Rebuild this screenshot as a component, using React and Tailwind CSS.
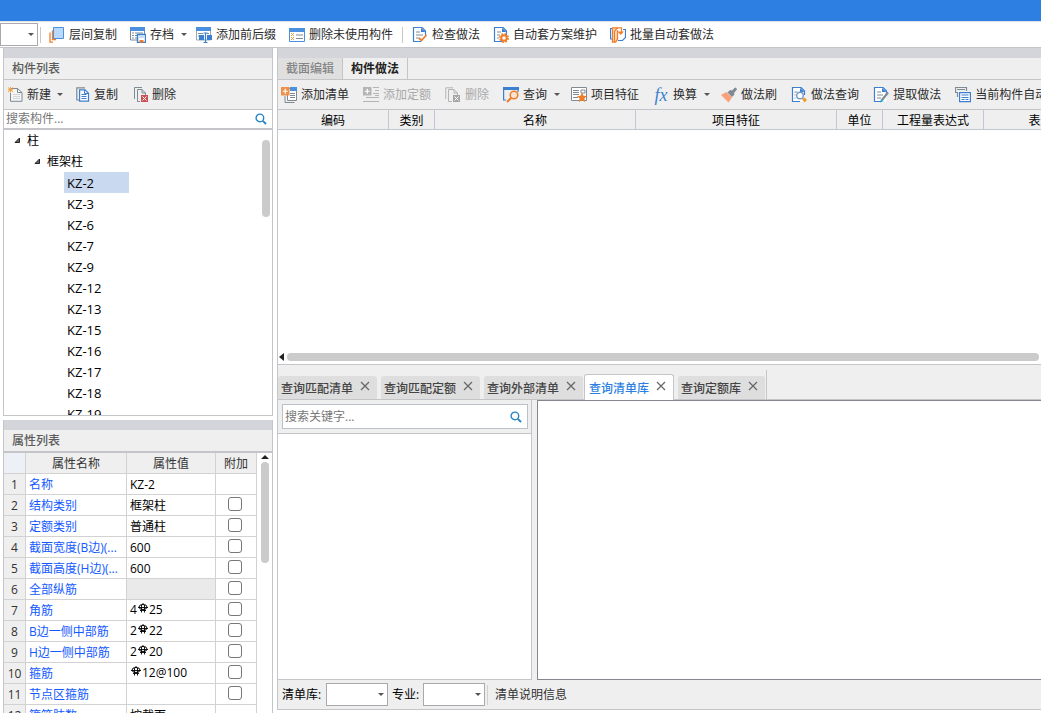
import React, { useState } from 'react';
import clsx from 'clsx';

const BLUE = '#3c7fd0';
const GRAY = '#7e8b94';
const ORANGE = '#f07d28';

const Icon = ({ children }) => (
    <svg width="16" height="16" viewBox="0 0 16 16" fill="none" className="shrink-0" aria-hidden="true">
        {children}
    </svg>
);

const Caret = () => (
    <svg width="6" height="3" viewBox="0 0 6 3" className="shrink-0" aria-hidden="true">
        <path d="M0 0h6L3 3z" fill="#555" />
    </svg>
);

const SearchIcon = () => (
    <svg width="12" height="12" viewBox="0 0 12 12" fill="none" aria-hidden="true">
        <circle cx="4.9" cy="4.9" r="3.8" stroke="#2484c1" strokeWidth="1.4" />
        <path d="M7.8 7.8L11 11" stroke="#2484c1" strokeWidth="1.8" />
    </svg>
);

// Page outline with a folded corner, shared by most document icons
const Page = ({ color = BLUE }) => (
    <>
        <path d="M1.5 .5H9l4.500 4v10h-12z" fill="#fff" />
        <path d="M9 14.500H1.500V.5H10l3.500 3.500V8" stroke={color} strokeWidth="1.2" />
        <path d="M9 1v4h4.500z" fill={color} />
    </>
);

const icons = {
    copyFloor: (
        <Icon>
            <path d="M1 5.500v9.700h3M3.500 3.500v9H7" stroke={ORANGE} strokeWidth="1.300" />
            <path d="M4.500 .5h10v11h-10z" fill="#b9d8fb" stroke="#4a90de" />
        </Icon>
    ),
    archive: (
        <Icon>
            <path d="M.5 1h14v12H.5z" fill="#fff" stroke={GRAY} />
            <path d="M0 0h15v4H0z" fill="#4a90de" />
            <path d="M2 6h2M2 8.500h2M2 11h2M5 6h8M5 8.500h2M5 11h2" stroke={GRAY} />
            <path d="M7.500 7.500h8v8h-8z" fill="#fff" stroke="#3c7fd0" strokeWidth="1.400" />
            <path d="M9 8h5v3H9z" fill="#c7def8" />
            <path d="M9.500 13h4v2.500h-4z" fill={ORANGE} />
        </Icon>
    ),
    prefix: (
        <Icon>
            <path d="M.5 1h14v12H.5z" fill="#fff" stroke="#9aa7b3" />
            <path d="M0 0h15v4H0z" fill="#4a90de" />
            <path d="M2 6.500h5M2 9h3M11 6.500h2" stroke={GRAY} />
            <path d="M3 8h5v5H3zM11 8h5v5h-5z" fill="#3c7fd0" />
            <path d="M9.500 6v9.500M7.500 6h4M7.500 15.500h4" stroke="#3c7fd0" strokeWidth="1.200" />
        </Icon>
    ),
    removeUnused: (
        <Icon>
            <path d="M.5 1.500h15v13H.5z" fill="#fff" stroke="#4a90de" />
            <path d="M0 1h16v4H0z" fill="#4a90de" />
            <path d="M2 6l3 3M5 6L2 9M2 10l3 3M5 10l-3 3" stroke="#f0a03c" />
            <path d="M7 8h7M7 11.500h7" stroke={GRAY} />
        </Icon>
    ),
    check: (
        <Icon>
            <Page />
            <path d="M4 5h4M4 8h7M4 11h3" stroke={GRAY} />
            <path d="M7 11l2.500 2.500L14.500 8" stroke={ORANGE} strokeWidth="1.800" />
        </Icon>
    ),
    scheme: (
        <Icon>
            <Page />
            <path d="M4 5h4M4 8h3M4 11h2" stroke={GRAY} />
            <circle cx="11" cy="11" r="2.800" stroke={ORANGE} strokeWidth="2" />
            <circle cx="11" cy="11" r="4.200" stroke={ORANGE} strokeWidth="1.600" strokeDasharray="1.800 1.500" />
        </Icon>
    ),
    batch: (
        <Icon>
            <path d="M2.500 1.500h-2v10.500h2M13 2.500h2.500v8L12.500 13.500H8" stroke="#3c7fd0" strokeWidth="1.200" />
            <path d="M7.500 .8h-5v14.400h3l2-3v-9" fill="#fbe3d0" stroke={ORANGE} strokeWidth="1.300" />
            <path d="M4.500 15V4l3-3.200h4V5" stroke={ORANGE} strokeWidth="1.200" />
            <path d="M7.500 4.500h6.500L10.700 8z" fill={ORANGE} />
        </Icon>
    ),
    create: (
        <Icon>
            <path d="M3 1.500h6.500L14 5.500v8.800H2.500V6" fill="#f4f4f4" stroke={GRAY} />
            <path d="M9.500 1.500v4H14" stroke={GRAY} />
            <path d="M5 7.500h7M5 9.500h7M5 11.500h7" stroke="#d2d7da" />
            <path d="M0 .5l5 4.500M5 .5L0 5M2.500 0v5.500M0 2.700h5" stroke="#f0a03c" />
        </Icon>
    ),
    copy: (
        <Icon>
            <path d="M10 .8H1.800V13H4" stroke={GRAY} strokeWidth="1.200" />
            <path d="M4.600 2.800H10l3.500 3.500v7.900H4.600z" fill="#fff" stroke="#3c7fd0" strokeWidth="1.200" />
            <path d="M9.500 3v3.500h4" stroke="#3c7fd0" />
            <path d="M6.500 7.500h5M6.500 9.500h5M6.500 11.500h5" stroke="#3c7fd0" />
        </Icon>
    ),
    remove: (
        <Icon>
            <path d="M9 .5H1.500V12" stroke={GRAY} />
            <path d="M7 14.500H4.500V2.500H9l3.500 3.500v2M9 2.500V6h3.500" stroke={GRAY} />
            <path d="M8 8h7v7H8z" fill="#cf4c50" />
            <path d="M9.500 9.500l4 4M13.500 9.500l-4 4" stroke="#fff" />
        </Icon>
    ),
    addList: (
        <Icon>
            <path d="M6.500 1.500h9v12h-9z" fill="#fff" stroke={GRAY} />
            <path d="M9 0h7v4H9z" fill="#4a90de" />
            <path d="M4 9v6.500h9.500M9 6.500h5M9 8.500h5M9 10.500h5" stroke={GRAY} />
            <path d="M0 0h8.500v8.500H0z" fill="#ee9048" />
            <path d="M4.250 1.800v5M1.800 4.250h5" stroke="#fff" strokeWidth="1.200" />
        </Icon>
    ),
    addQuota: (
        <Icon>
            <path d="M0 0h8.500v8.500H0z" fill="#b4b4b4" />
            <path d="M4.250 1.800v5M1.800 4.250h5" stroke="#fff" strokeWidth="1.200" />
            <path d="M10 .5h6M12 3.500h4M10 6.500h6M12 8.500h4M3 10.500h13M0 14.500h16" stroke="#b4b4b4" />
        </Icon>
    ),
    removeOff: (
        <Icon>
            <path d="M8 .8H.8V12" stroke="#b4b4b4" />
            <path d="M7 14.500H3.500V2.500H9l3.500 3.500v2M9 2.500V6h3.500" stroke="#b4b4b4" />
            <path d="M8 8h7v7H8z" fill="#a5a5a5" />
            <path d="M9.500 9.500l4 4M13.500 9.500l-4 4" stroke="#fff" />
        </Icon>
    ),
    query: (
        <Icon>
            <path d="M15 5V1.500H.6V13H3" stroke="#3c7fd0" strokeWidth="1.200" />
            <path d="M0 0h16v3H0z" fill="#3c7fd0" />
            <circle cx="11" cy="8" r="3.800" fill="#f7e6d8" stroke={ORANGE} strokeWidth="1.500" />
            <path d="M8.300 10.700L4 15" stroke={ORANGE} strokeWidth="2.200" />
        </Icon>
    ),
    feature: (
        <Icon>
            <path d="M.5 .5h15v13H.5z" fill="#fff" stroke={GRAY} />
            <path d="M2 3.500h6M2 5.500h6M2 7.500h6M2 10.500h5M10 3h4v3h-4z" stroke={GRAY} />
            <path d="M11 5.500l1.500 3.200 3.500.4-2.600 2.400.7 3.500-3.100-1.700L7.900 15l.7-3.500L6 9.100l3.500-.4z" fill={ORANGE} />
        </Icon>
    ),
    brush: (
        <Icon>
            <path d="M15 .5l1 2-3 3.500 .5 1.500L11 10 6.500 5.500 9 3l2 .5L13.500 1z" fill="#7e8b94" />
            <path d="M5.500 5l5.500 5.500-3.500 5L0 8z" fill="#f9a27a" />
        </Icon>
    ),
    methodQuery: (
        <Icon>
            <Page />
            <path d="M3.500 5h3M3.500 8h1M3.500 11h1" stroke={GRAY} />
            <circle cx="9" cy="8.500" r="3.300" fill="#fff" stroke="#6f9bc9" strokeWidth="1.400" />
            <path d="M11 12l2.500-1.500L16 13l-2.500 2.500z" fill="#f09a28" />
        </Icon>
    ),
    extract: (
        <Icon>
            <Page />
            <path d="M4 5h4M4 8h6M4 11h4" stroke={GRAY} />
            <path d="M15 5.500L9 13" stroke={GRAY} strokeWidth="2.200" />
            <path d="M8 12l-1 3.500 3.500-1.500z" fill="#2aa5c8" />
        </Icon>
    ),
    auto: (
        <Icon>
            <path d="M3 5.500H.5v-5h11V4M2.500 5.500V10" stroke={GRAY} strokeWidth="1.200" />
            <path d="M2 2.500h8" stroke={GRAY} />
            <path d="M4.600 5.600h10.800v9H4.600z" fill="#fff" stroke="#3c7fd0" strokeWidth="1.200" />
            <path d="M6.500 8h7M6.500 12.500h3M10.500 12.500h3M6.500 10.500h7" stroke="#3c7fd0" strokeWidth="1.200" />
        </Icon>
    ),
    fx: <span className="w-4 shrink-0 font-['Liberation_Serif',serif] text-[18px] leading-4 text-[#3c7fd0] italic">fx</span>,
};

const ToolButton = ({ icon, label, caret, disabled, className }) => (
    <button
        type="button"
        disabled={disabled}
        className={clsx('flex shrink-0 items-center whitespace-nowrap', disabled ? 'text-[#a8a8a8]' : 'text-[#2b2b2b]', className)}
    >
        {icons[icon]}
        {label}
        {caret && <span className="pl-[3px]"><Caret /></span>}
    </button>
);

const Combo = ({ label, className }) => (
    <span className={clsx('relative block h-[23px] shrink-0', className)}>
        <select aria-label={label} className="size-full appearance-none border border-[#a9a9ac] bg-white" />
        <span className="pointer-events-none absolute top-[10px] right-[4px]"><Caret /></span>
    </span>
);

const components = ['KZ-2', 'KZ-3', 'KZ-6', 'KZ-7', 'KZ-9', 'KZ-12', 'KZ-13', 'KZ-15', 'KZ-16', 'KZ-17', 'KZ-18', 'KZ-19'];

// '#' in a value stands for the rebar grade sign
const properties = [
    { name: '名称', value: 'KZ-2', noCheck: true },
    { name: '结构类别', value: '框架柱' },
    { name: '定额类别', value: '普通柱' },
    { name: '截面宽度(B边)(...', value: '600' },
    { name: '截面高度(H边)(...', value: '600' },
    { name: '全部纵筋', value: '', locked: true },
    { name: '角筋', value: '4#25' },
    { name: 'B边一侧中部筋', value: '2#22' },
    { name: 'H边一侧中部筋', value: '2#20' },
    { name: '箍筋', value: '#12@100' },
    { name: '节点区箍筋', value: '' },
    { name: '箍筋肢数', value: '按截面', noCheck: true },
];

const RebarSign = () => (
    <svg width="12" height="10" viewBox="0 0 12 10" fill="none" stroke="#000" className="inline-block align-[1px]" aria-label="Φ">
        <ellipse cx="6" cy="4" rx="4" ry="2.500" />
        <path d="M1 4.500h10M3 7.500h6M4.500 2v7.500M7.500 2v7.500M6 0v2" strokeWidth=".9" />
    </svg>
);

const Value = ({ text }) => {
    const [before, after] = text.split('#');
    return after === undefined ? text : <>{before}<RebarSign />{after}</>;
};

const TreeArrow = () => (
    <svg width="7" height="7" viewBox="0 0 7 7" className="shrink-0" aria-hidden="true">
        <path d="M5.500 1v4.500H1z" fill="#666" stroke="#222" />
    </svg>
);

const ComponentPanel = () => {
    const [selected, setSelected] = useState('KZ-2');

    return (
        <section className="flex min-h-0 flex-[368] flex-col border border-t-0 border-[#c3c5c9]">
            <div className="h-[10px] shrink-0 bg-[#d4d5da]" />
            <h2 className="flex h-[22px] shrink-0 items-center border-b border-[#c3c5c9] bg-[#efefef] pl-2 font-medium text-[#5c5c5c]">构件列表</h2>
            <div className="flex h-[30px] shrink-0 items-center border-b border-[#c3c5c9] bg-[#efefef] pl-1">
                <ToolButton icon="create" label="新建" caret className="gap-[3px] pr-3" />
                <ToolButton icon="copy" label="复制" className="gap-[3px] pr-[15px]" />
                <ToolButton icon="remove" label="删除" className="gap-[3px]" />
            </div>
            <div className="flex h-5 shrink-0 items-center border-b-2 border-[#c3c5c9] pr-[5px]">
                <input type="text" aria-label="搜索构件" placeholder="搜索构件..." className="min-w-0 flex-1 pl-[2px] outline-none placeholder:text-[#777]" />
                <button type="button" aria-label="搜索"><SearchIcon /></button>
            </div>
            <div className="flex min-h-0 flex-1 overflow-hidden">
                <ul className="min-w-0 flex-1 text-black">
                    <li className="flex h-[21px] items-center gap-[6px] pl-[10px]"><TreeArrow />柱</li>
                    <li className="flex h-[21px] items-center gap-[6px] pl-[30px]"><TreeArrow />框架柱</li>
                    {components.map((name) => (
                        <li key={name} className="pl-[60px]">
                            <button
                                type="button"
                                onClick={() => setSelected(name)}
                                className={clsx('block h-[21px] w-[65px] pl-[3px] text-left text-[13px]', selected === name && 'bg-[#c9d9f0]')}
                            >
                                {name}
                            </button>
                        </li>
                    ))}
                </ul>
                <div className="mt-[10px] mr-[2px] h-[77px] w-2 rounded-full bg-[#cbcbcb]" />
            </div>
        </section>
    );
};

const PropertyPanel = () => (
    <section className="flex min-h-0 flex-[293] flex-col overflow-hidden border-x border-[#c3c5c9]">
        <div className="h-[10px] shrink-0 bg-[#d4d5da]" />
        <h2 className="flex h-[23px] shrink-0 items-center border-b-2 border-[#c3c5c9] bg-[#efefef] pl-2 font-medium text-[#5c5c5c]">属性列表</h2>
        <div className="flex min-h-0 flex-1 overflow-hidden">
            <table className="w-[253px] table-fixed border-separate border-spacing-0 self-start [&_td]:h-[21px] [&_td]:border-r [&_td]:border-b [&_td]:border-[#d2d2d2] [&_th]:h-[21px] [&_th]:border-r [&_th]:border-b [&_th]:border-[#d2d2d2] [&_th]:px-0 [&_th]:pt-[2px] [&_th]:pb-0 [&_th]:font-normal">
                <colgroup>
                    <col className="w-[22px]" />
                    <col className="w-[101px]" />
                    <col className="w-[89px]" />
                    <col className="w-[41px]" />
                </colgroup>
                <thead>
                    <tr className="bg-[#efefef] text-[#333]">
                        <th className="bg-[#edf1f7]" />
                        <th>属性名称</th>
                        <th>属性值</th>
                        <th>附加</th>
                    </tr>
                </thead>
                <tbody>
                    {properties.map((row, i) => (
                        <tr key={row.name}>
                            <td className="bg-[#efefef] p-0 pt-[2px] text-center text-[#333]">{i + 1}</td>
                            <td className="p-0 pt-[2px] text-[#1259ff]"><div className="pl-[3px] whitespace-nowrap">{row.name}</div></td>
                            <td className={clsx('p-0 text-black', row.locked && 'bg-[#eaeaea]', !row.value.includes('#') && 'pt-[2px]')}>
                                <div className="pl-[3px] whitespace-nowrap"><Value text={row.value} /></div>
                            </td>
                            <td className="p-0 pr-[2px] pb-[2px]">
                                {!row.noCheck && (
                                    <input
                                        type="checkbox"
                                        aria-label={row.name}
                                        className="mx-auto block size-[14px] appearance-none rounded-[3px] border border-[#777] bg-white checked:bg-[#2d7fe2]"
                                    />
                                )}
                            </td>
                        </tr>
                    ))}
                </tbody>
            </table>
            <div className="flex flex-1 flex-col items-center gap-[3px] pt-[2px]">
                <svg width="8" height="4" viewBox="0 0 8 4" className="shrink-0" aria-hidden="true"><path d="M0 4h8L4 0z" fill="#222" /></svg>
                <div className="h-[101px] w-2 shrink-0 rounded-full bg-[#cbcbcb]" />
            </div>
        </div>
    </section>
);

const columns = [
    { title: '编码', width: 'w-[111px]' },
    { title: '类别', width: 'w-[46px]' },
    { title: '名称', width: 'w-[201px]' },
    { title: '项目特征', width: 'w-[201px]' },
    { title: '单位', width: 'w-[46px]' },
    { title: '工程量表达式', width: 'w-[101px]' },
    { title: '表达式说明', width: 'w-[150px]' },
];

const MethodPanel = () => (
    <section className="flex min-h-0 flex-[317] flex-col border-b border-l border-[#c3c5c9]">
        <div className="h-[10px] shrink-0 bg-[#d4d5da]" />
        <div className="flex h-[22px] shrink-0 border-b border-[#c3c5c9] bg-[#efefef]">
            <button type="button" className="w-[65px] border-r border-[#c3c5c9] bg-[#dfdfdf] font-medium text-[#858585]">截面编辑</button>
            <button type="button" className="w-[65px] border-r border-[#c3c5c9] font-bold text-[#222]">构件做法</button>
        </div>
        <div className="flex h-[30px] shrink-0 items-center overflow-hidden border-b border-[#c3c5c9] bg-[#efefef] pl-[3px]">
            <ToolButton icon="addList" label="添加清单" className="gap-1 pr-[14px]" />
            <ToolButton icon="addQuota" label="添加定额" disabled className="gap-1 pr-[14px]" />
            <ToolButton icon="removeOff" label="删除" disabled className="gap-1 pr-[14px]" />
            <ToolButton icon="query" label="查询" caret className="gap-1 pr-[11px]" />
            <ToolButton icon="feature" label="项目特征" className="gap-1 pr-[14px]" />
            <ToolButton icon="fx" label="换算" caret className="gap-1 pr-[11px]" />
            <ToolButton icon="brush" label="做法刷" className="gap-1 pr-[14px]" />
            <ToolButton icon="methodQuery" label="做法查询" className="gap-1 pr-[14px]" />
            <ToolButton icon="extract" label="提取做法" className="gap-1 pr-[14px]" />
            <ToolButton icon="auto" label="当前构件自动套做法" className="gap-1" />
        </div>
        <div className="min-h-0 flex-1 overflow-hidden">
            <table className="w-[856px] table-fixed border-separate border-spacing-0 text-black">
                <thead>
                    <tr>
                        {columns.map((col) => (
                            <th key={col.title} className={clsx('h-5 border-r border-b border-[#c0c6d2] bg-[#efefef] p-0 pt-[2px] font-normal', col.width)}>
                                {col.title}
                            </th>
                        ))}
                    </tr>
                </thead>
            </table>
        </div>
        <div className="flex h-[11px] shrink-0 items-start gap-[3px] pr-[2px] pl-[1px]">
            <svg width="5" height="8" viewBox="0 0 5 8" className="shrink-0" aria-hidden="true"><path d="M5 0v8L0 4z" fill="#222" /></svg>
            <div className="h-2 flex-1 rounded-full bg-[#cbcbcb]" />
        </div>
    </section>
);

const queryTabs = ['查询匹配清单', '查询匹配定额', '查询外部清单', '查询清单库', '查询定额库'];

const QueryPanel = () => {
    const [active, setActive] = useState('查询清单库');

    return (
        <section className="flex min-h-0 flex-[345] flex-col border-b border-l border-[#c3c5c9] bg-[#efefef]">
            <div className="flex h-[35px] shrink-0 border-b border-[#c3c5c9] pt-[5px]">
                <div className="flex items-end gap-1 border-r border-[#c3c5c9] pr-px">
                    {queryTabs.map((tab) => (
                        <div
                            key={tab}
                            className={clsx(
                                'flex items-center gap-[7px] rounded-t-[3px] font-medium',
                                active === tab
                                    ? '-mb-px -ml-[3px] h-[26px] border border-b-0 border-[#c3c5c9] bg-white pr-[7px] pl-1 text-[#2d7fe2]'
                                    : 'h-[23px] bg-[#dedede] pr-[7px] pl-[3px] text-[#444]'
                            )}
                        >
                            <button type="button" onClick={() => setActive(tab)} className="pt-[2px]">{tab}</button>
                            <button type="button" aria-label={`关闭${tab}`} className="pb-1">
                                <svg width="10" height="10" viewBox="0 0 10 10" aria-hidden="true">
                                    <path d="M1 1l8 8M9 1L1 9" stroke="#666" strokeWidth="1.200" />
                                </svg>
                            </button>
                        </div>
                    ))}
                </div>
            </div>
            <div className="flex min-h-0 flex-1">
                <div className="flex w-[254px] shrink-0 flex-col border-r border-b border-[#c3c5c9]">
                    <div className="shrink-0 border-b border-[#c3c5c9] py-1 pr-[3px] pl-1">
                        <div className="flex h-[25px] items-center border border-[#bcc0c8] bg-white pr-[5px]">
                            <input type="text" aria-label="搜索关键字" placeholder="搜索关键字..." className="min-w-0 flex-1 pl-[2px] outline-none placeholder:text-[#777]" />
                            <button type="button" aria-label="搜索"><SearchIcon /></button>
                        </div>
                    </div>
                    <div className="flex-1 bg-white" />
                </div>
                <div className="ml-[5px] flex-1 border border-r-0 border-[#85878f] bg-white" />
            </div>
            <div className="flex h-[29px] shrink-0 items-center pl-1 text-black">
                <span className="w-[44px]">清单库:</span>
                <Combo label="清单库" className="w-[62px]" />
                <span className="ml-1 w-[31px]">专业:</span>
                <Combo label="专业" className="w-[62px]" />
                <span className="ml-[2px] h-5 border-l border-[#d0d0d0] pl-[7px] leading-5 text-[#333]">清单说明信息</span>
            </div>
        </section>
    );
};

const App = () => (
    <div className="flex h-screen flex-col overflow-hidden bg-white font-['Open_Sans','Noto_Sans_CJK_SC',sans-serif] text-[12px] leading-4">
        <header className="h-[21px] shrink-0 bg-[#2d7fe2]" />
        <nav className="flex h-[27px] shrink-0 items-center overflow-hidden border-y border-t-[#dfe3e8] border-b-[#c3c5c9]">
            <Combo label="楼层" className="w-[38px]" />
            <span className="mr-2 ml-[2px] h-4 border-l border-[#c8c8c8]" />
            <ToolButton icon="copyFloor" label="层间复制" className="gap-1 pr-[13px]" />
            <ToolButton icon="archive" label="存档" caret className="gap-1 pr-[9px]" />
            <ToolButton icon="prefix" label="添加前后缀" className="gap-1 pr-[13px]" />
            <ToolButton icon="removeUnused" label="删除未使用构件" className="gap-1" />
            <span className="mx-[9px] h-4 border-l border-[#c8c8c8]" />
            <ToolButton icon="check" label="检查做法" className="gap-1 pr-[13px]" />
            <ToolButton icon="scheme" label="自动套方案维护" className="gap-1 pr-[13px]" />
            <ToolButton icon="batch" label="批量自动套做法" className="gap-1" />
        </nav>
        <div className="flex min-h-0 flex-1">
            <aside className="ml-[3px] flex w-[270px] shrink-0 flex-col gap-1">
                <ComponentPanel />
                <PropertyPanel />
            </aside>
            <main className="ml-1 flex min-w-0 flex-1 flex-col pb-[3px]">
                <MethodPanel />
                <QueryPanel />
            </main>
        </div>
    </div>
);

export default App;
